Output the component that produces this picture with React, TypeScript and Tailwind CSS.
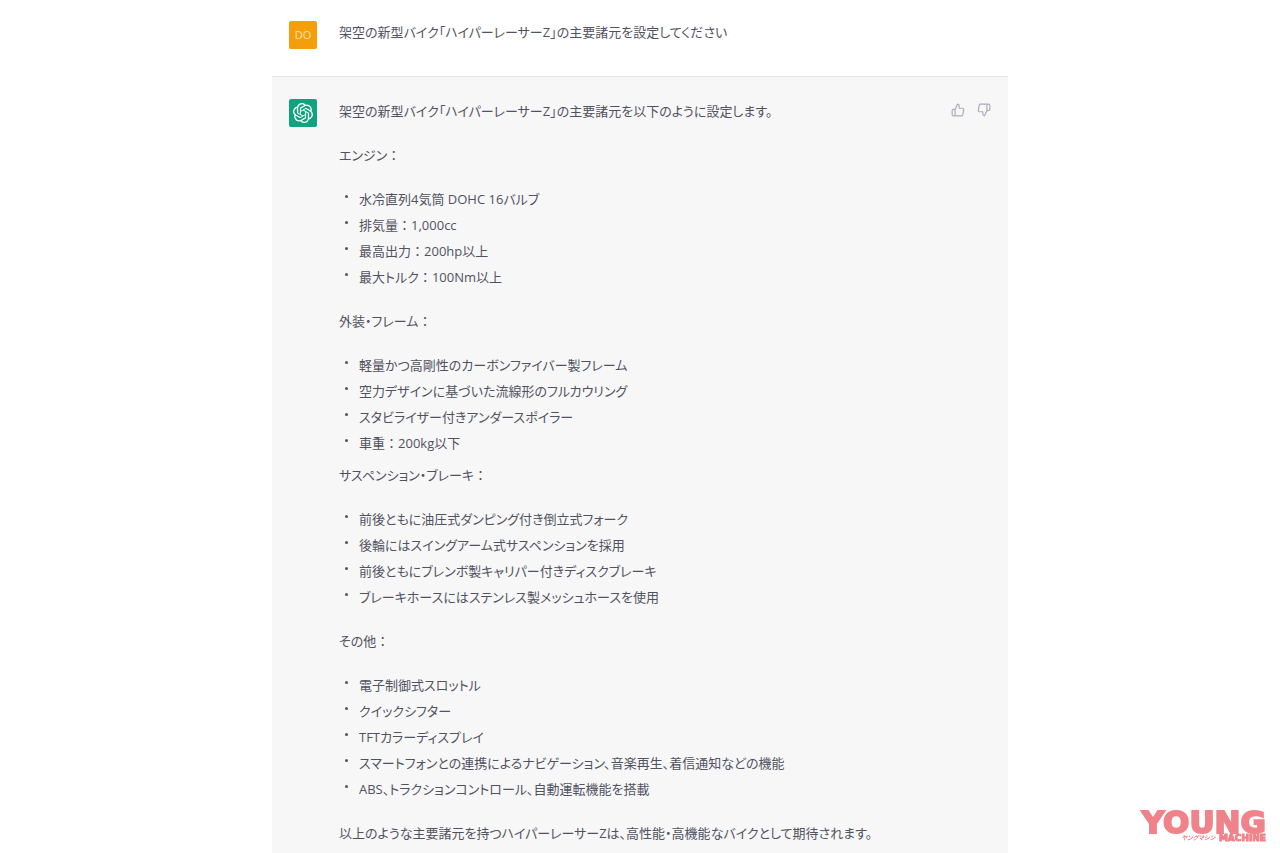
import { FiThumbsDown, FiThumbsUp } from 'react-icons/fi';
import { SiOpenai } from 'react-icons/si';

interface Section {
    title: string;
    items: string[];
    tight?: boolean;
}

const sections: Section[] = [
    {
        title: 'エンジン：',
        items: ['水冷直列4気筒 DOHC 16バルブ', '排気量：1,000cc', '最高出力：200hp以上', '最大トルク：100Nm以上'],
    },
    {
        title: '外装・フレーム：',
        items: [
            '軽量かつ高剛性のカーボンファイバー製フレーム',
            '空力デザインに基づいた流線形のフルカウリング',
            'スタビライザー付きアンダースポイラー',
            '車重：200kg以下',
        ],
    },
    {
        title: 'サスペンション・ブレーキ：',
        tight: true,
        items: [
            '前後ともに油圧式ダンピング付き倒立式フォーク',
            '後輪にはスイングアーム式サスペンションを採用',
            '前後ともにブレンボ製キャリパー付きディスクブレーキ',
            'ブレーキホースにはステンレス製メッシュホースを使用',
        ],
    },
    {
        title: 'その他：',
        items: [
            '電子制御式スロットル',
            'クイックシフター',
            'TFTカラーディスプレイ',
            'スマートフォンとの連携によるナビゲーション、音楽再生、着信通知などの機能',
            'ABS、トラクションコントロール、自動運転機能を搭載',
        ],
    },
];

// Kana are set proportionally, but the colon keeps its full width.
function Label({ text }: { text: string }) {
    const [head, tail] = text.split('：');
    return (
        <span>
            {head}
            {tail !== undefined && <span className="[font-feature-settings:normal]">：</span>}
            {tail}
        </span>
    );
}

function SpecSection({ title, items, tight }: Section) {
    return (
        <section className={tight ? 'mt-1.5' : 'mt-[18px]'}>
            <p>
                <Label text={title} />
            </p>
            <ul className="mt-[18px]">
                {items.map((item) => (
                    <li key={item} className="flex gap-[11px] pl-1.5">
                        <span className="mt-[9px] h-[3px] w-[3px] shrink-0 rounded-full bg-[#50525f]" />
                        <Label text={item} />
                    </li>
                ))}
            </ul>
        </section>
    );
}

function Feedback() {
    return (
        <div className="flex shrink-0 items-start gap-3 pt-[5px] text-[#acacbe]">
            <button type="button" aria-label="Good response">
                <FiThumbsUp size={14} />
            </button>
            <button type="button" aria-label="Bad response">
                <FiThumbsDown size={14} />
            </button>
        </div>
    );
}

function Watermark() {
    return (
        <div className="fixed bottom-[11px] right-3.5 flex flex-col items-end font-['DejaVu_Sans'] font-bold text-[#f0828a]">
            <span className="text-[31px] leading-6 [-webkit-text-stroke:2px_#f0828a]">YOUNG</span>
            <span className="flex items-center gap-1 leading-2">
                <span className="font-['Noto_Sans_CJK_JP',sans-serif] text-[6px] italic [-webkit-text-stroke:0]">ヤングマシン</span>
                <span className="text-[9px] [-webkit-text-stroke:1px_#f0828a]">MACHINE</span>
            </span>
        </div>
    );
}

export default function App() {
    return (
        <div className="min-h-screen bg-white font-['Open_Sans','Noto_Sans_CJK_JP',sans-serif] text-[13px] leading-[26px] text-[#50525f] [font-feature-settings:'palt']">
            <main className="mx-auto flex min-h-screen w-full max-w-[736px] flex-col">
                <div className="flex gap-[22px] border-b border-[#e8e8ea] px-[17px] pb-[27px] pt-[19px]">
                    <div className="mt-0.5 flex h-7 w-7 shrink-0 items-center justify-center rounded-xs bg-[#f59e0b] text-[11px] text-[#fde3b0]">
                        DO
                    </div>
                    <p>架空の新型バイク「ハイパーレーサーZ」の主要諸元を設定してください</p>
                </div>
                <div className="flex flex-1 gap-[22px] bg-[#f7f7f8] px-[17px] pt-[21px]">
                    <div className="mt-px flex h-7 w-7 shrink-0 items-center justify-center rounded-xs bg-[#10a37f] text-white">
                        <SiOpenai size={20} />
                    </div>
                    <div className="min-w-0 flex-1">
                        <p>架空の新型バイク「ハイパーレーサーZ」の主要諸元を以下のように設定します。</p>
                        {sections.map((section) => (
                            <SpecSection key={section.title} {...section} />
                        ))}
                        <p className="mt-[18px]">
                            以上のような主要諸元を持つハイパーレーサーZは、高性能・高機能なバイクとして期待されます。
                        </p>
                    </div>
                    <Feedback />
                </div>
            </main>
            <Watermark />
        </div>
    );
}
